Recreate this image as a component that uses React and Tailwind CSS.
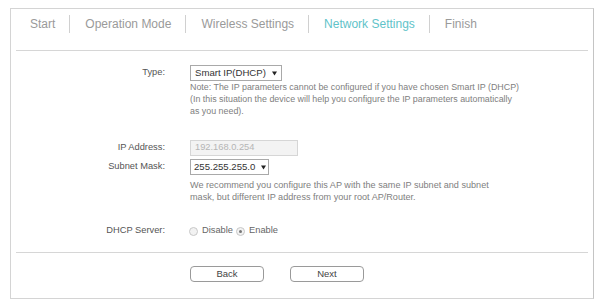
import React from 'react';

const tabs = ['Start', 'Operation Mode', 'Wireless Settings', 'Network Settings', 'Finish'];

const Arrow = () => (
    <svg width="5" height="5" viewBox="0 0 6 5" className="ml-[6px] shrink-0">
        <path d="M0 0 L6 0 L3 5 Z" fill="#222" />
    </svg>
);

const Label = ({ children, className = '' }) => (
    <div className={`w-[154px] shrink-0 text-right text-[9.3px] text-[#555] ${className}`}>{children}</div>
);

const Radio = ({ checked }) => (
    <span className="inline-flex items-center justify-center w-[9px] h-[9px] rounded-full border border-[#c8c8c8] bg-[#f2f2f2]">
        {checked && <span className="w-[3px] h-[3px] rounded-full bg-[#777]" />}
    </span>
);

export default function App() {
    return (
        <div className="w-[604px] h-[305px] bg-white pt-[8px] pl-[10px] font-['Liberation_Sans',Arial,sans-serif]">
            <div className="w-[584px] h-[291px] border border-[#d4d4d4] border-r-[#c4c4c4] flex flex-col">
                {/* wizard steps */}
                <div className="h-[42px] mx-[5px] border-b border-[#d6d6d6] flex items-start pt-[6px] pl-[14px]">
                    {tabs.map((t, i) => (
                        <div key={t} className="flex items-center">
                            {i > 0 && <span className="w-px h-[18px] bg-[#d0d0d0] ml-[14px] mr-[15px]" />}
                            <span
                                className={`text-[12px] leading-[18px] ${t === 'Network Settings' ? 'text-[#5fc3c9]' : 'text-[#9a9a9a]'}`}
                            >
                                {t}
                            </span>
                        </div>
                    ))}
                </div>

                {/* form */}
                <div className="flex flex-col pt-[14px]">
                    <div className="flex items-center h-[16px]">
                        <Label>Type:</Label>
                        <div className="ml-[25px] h-[16px] w-[92px] border border-[#a9a9a9] flex items-center pl-[4px] text-[9.6px] text-[#333] whitespace-nowrap">
                            Smart IP(DHCP)
                            <Arrow />
                        </div>
                    </div>
                    <p className="ml-[179px] text-[8.9px] leading-[12px] text-[#808080] whitespace-nowrap">
                        Note: The IP parameters cannot be configured if you have chosen Smart IP (DHCP)
                        <br />
                        (In this situation the device will help you configure the IP parameters automatically
                        <br />
                        as you need).
                    </p>

                    <div className="flex items-center h-[16px] mt-[23px]">
                        <Label>IP Address:</Label>
                        <div className="ml-[25px] h-[16px] w-[108px] border border-[#d6d6d6] bg-[#f3f3f3] flex items-center pl-[4px] text-[9.3px] text-[#b5b5b5]">
                            192.168.0.254
                        </div>
                    </div>
                    <div className="flex items-center h-[16px] mt-[3px]">
                        <Label>Subnet Mask:</Label>
                        <div className="ml-[25px] h-[16px] w-[79px] border border-[#a9a9a9] flex items-center pl-[3px] text-[9.6px] text-[#333] whitespace-nowrap">
                            255.255.255.0
                            <Arrow />
                        </div>
                    </div>
                    <p className="ml-[179px] mt-[4px] text-[9.1px] leading-[12px] text-[#808080] whitespace-nowrap">
                        We recommend you configure this AP with the same IP subnet and subnet
                        <br />
                        mask, but different IP address from your root AP/Router.
                    </p>

                    <div className="flex items-center h-[16px] mt-[20px]">
                        <Label>DHCP Server:</Label>
                        <div className="ml-[24px] flex items-center text-[9.3px] text-[#666]">
                            <Radio />
                            <span className="ml-[4px]">Disable</span>
                            <span className="ml-[3px]">
                                <Radio checked />
                            </span>
                            <span className="ml-[4px]">Enable</span>
                        </div>
                    </div>
                </div>

                <div className="mx-[5px] mt-[13px] border-t border-[#d6d6d6] flex pl-[174px] pt-[13px] gap-[26px]">
                    <button className="w-[74px] h-[16px] border border-[#9a9a9a] rounded-[4px] text-[9.5px] leading-[14px] text-[#444] bg-white">
                        Back
                    </button>
                    <button className="w-[74px] h-[16px] border border-[#9a9a9a] rounded-[4px] text-[9.5px] leading-[14px] text-[#444] bg-white">
                        Next
                    </button>
                </div>
            </div>
        </div>
    );
}
